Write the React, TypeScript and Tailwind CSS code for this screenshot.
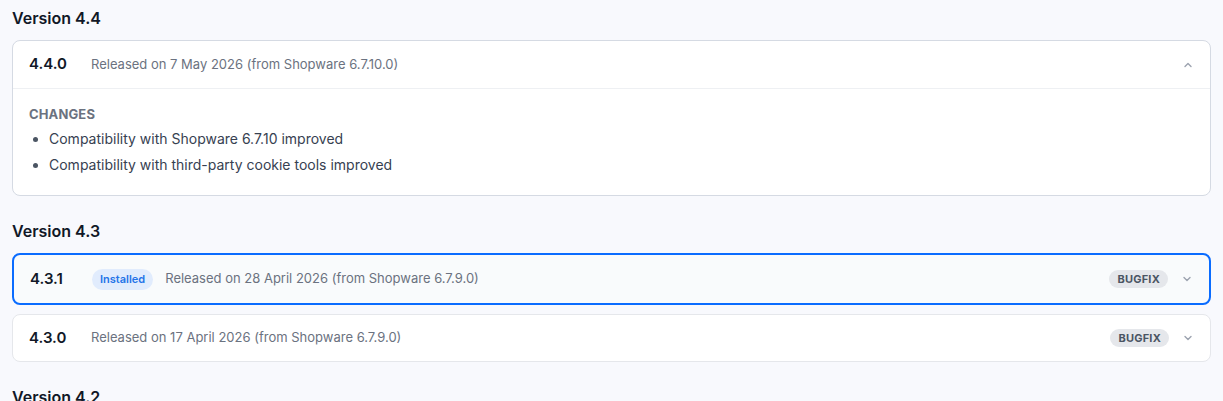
import { ReactNode } from 'react';

type Release = {
  version: string;
  date: string;
  shopware: string;
  installed?: boolean;
  bugfix?: boolean;
  open?: boolean;
  changes?: string[];
};

const sections: { title: string; releases: Release[] }[] = [
  {
    title: 'Version 4.4',
    releases: [
      {
        version: '4.4.0',
        date: '7 May 2026',
        shopware: '6.7.10.0',
        open: true,
        changes: [
          'Compatibility with Shopware 6.7.10 improved',
          'Compatibility with third-party cookie tools improved',
        ],
      },
    ],
  },
  {
    title: 'Version 4.3',
    releases: [
      { version: '4.3.1', date: '28 April 2026', shopware: '6.7.9.0', installed: true, bugfix: true },
      { version: '4.3.0', date: '17 April 2026', shopware: '6.7.9.0', bugfix: true },
    ],
  },
  { title: 'Version 4.2', releases: [] },
];

function Chevron({ up }: { up?: boolean }) {
  return (
    <svg width="10" height="10" viewBox="0 0 10 10" className="mr-px text-[#9ca3af]">
      <path
        d={up ? 'M2 6.5 L5 3.5 L8 6.5' : 'M2 3.5 L5 6.5 L8 3.5'}
        fill="none"
        stroke="currentColor"
        strokeWidth="1.4"
        strokeLinecap="round"
        strokeLinejoin="round"
      />
    </svg>
  );
}

function Badge({ children, tone }: { children: ReactNode; tone: 'blue' | 'gray' }) {
  if (tone === 'blue') {
    return (
      <span className="flex h-[21px] items-center rounded-full bg-[#e1ecfd] px-2 text-[11px] font-semibold text-[#2574e8]">
        {children}
      </span>
    );
  }
  return (
    <span className="flex h-[18px] items-center rounded-full bg-[#e5e7eb] px-2 text-[11px] font-bold tracking-[0.02em] text-[#4b5563]">
      {children}
    </span>
  );
}

function ReleaseCard({ release }: { release: Release }) {
  const cardTone = release.installed
    ? 'border-2 border-[#0a6cff] bg-[#f9fbfc]'
    : release.open
      ? 'border border-[#d5dae3] bg-white'
      : 'border border-[#e5e7eb] bg-white';

  const headerHeight = release.installed ? 'h-12' : release.open ? 'h-[47px]' : 'h-[46px]';

  return (
    <div className={`overflow-hidden rounded-lg ${cardTone}`}>
      {/* Header */}
      <div className={`flex items-center gap-3 px-4 ${headerHeight}`}>
        <span className="w-[50px] shrink-0 text-[15px] font-semibold text-[#111827]">{release.version}</span>
        {release.installed && <Badge tone="blue">Installed</Badge>}
        <span className="text-[13px] text-[#6b7280]">
          Released on {release.date} (from Shopware {release.shopware})
        </span>
        <div className="ml-auto flex items-center gap-[14px]">
          {release.bugfix && <Badge tone="gray">BUGFIX</Badge>}
          <Chevron up={release.open} />
        </div>
      </div>

      {/* Changes */}
      {release.open && release.changes && (
        <div className="border-t border-[#eef0f3] px-4 pt-[15px] pb-[17px]">
          <div className="text-[13px] leading-5 font-bold tracking-[0.01em] text-[#6b7280]">CHANGES</div>
          <ul className="mt-[2px]">
            {release.changes.map((change) => (
              <li key={change} className="flex items-center text-[14px] leading-[26px] text-[#374151]">
                <span className="ml-[4px] mr-[11px] h-[5px] w-[5px] rounded-full bg-[#4b5563]" />
                {change}
              </li>
            ))}
          </ul>
        </div>
      )}
    </div>
  );
}

export default function App() {
  return (
    <div className="min-h-[401px] bg-[#f8f9fd] px-3 pt-1.5 font-['Inter',sans-serif]">
      {sections.map((section, i) => (
        <section key={section.title} className={i > 0 ? 'mt-[23px]' : ''}>
          <h2 className="mb-2.5 text-base leading-6 font-semibold text-[#111827]">{section.title}</h2>
          <div className="flex flex-col gap-[9px]">
            {section.releases.map((release) => (
              <ReleaseCard key={release.version} release={release} />
            ))}
          </div>
        </section>
      ))}
    </div>
  );
}
